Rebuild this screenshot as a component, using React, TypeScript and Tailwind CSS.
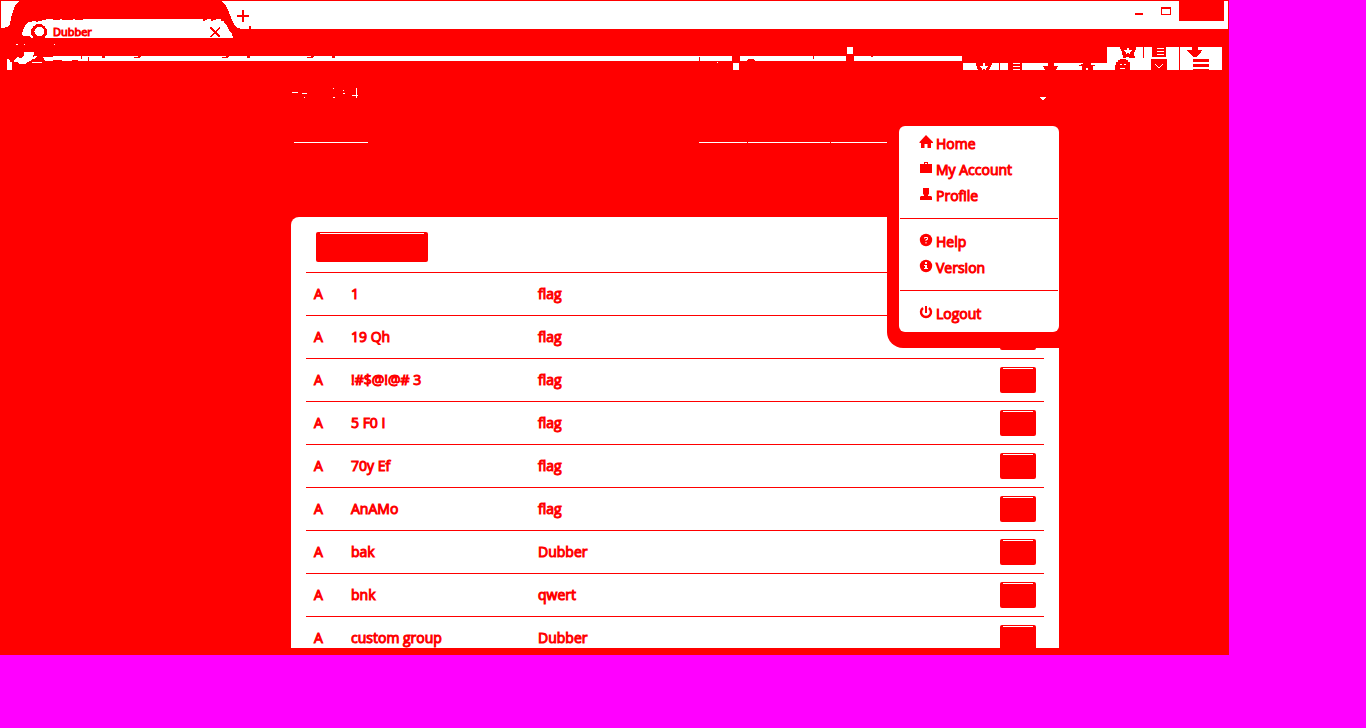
import type { ReactNode } from "react";

const RED = "#ff0000";

const rows: [string, string, string][] = [
  ["A", "1", "flag"],
  ["A", "19 Qh", "flag"],
  ["A", "!#$@!@# 3", "flag"],
  ["A", "5 F0 I", "flag"],
  ["A", "70y Ef", "flag"],
  ["A", "AnAMo", "flag"],
  ["A", "bak", "Dubber"],
  ["A", "bnk", "qwert"],
  ["A", "custom group", "Dubber"],
];

function TabStrip() {
  return (
    <div className="relative flex h-[29px] shrink-0 items-start justify-between border-x border-t border-[#ff0000] bg-white">
      <div className="absolute -top-px -left-px h-[38px] w-[260px]">
        <svg className="block" width="260" height="38" viewBox="0 0 260 38" shapeRendering="crispEdges" aria-hidden="true">
          <path fill={RED} d="M0 28H2L7 27L10 24L11 18L13 11L15 6L18 2L21 0H220L225 4L228 10L230 15L233 22L236 27L241 29V38H0Z" />
          <path
            fill="#fff"
            d="M22 34L23 30L25 26L28 22H32V21H36V22H38V21L46 20V19H53V20H60V19H62V20H73V19H75V20H83V19H203V21H205V20H207V19H211V21H213V20H216V19H221V21H224V23L227 26L229 30L232 34L233 38H31L30 36L23 36Z"
          />
          <circle cx="39" cy="32" r="8" fill={RED} />
          <circle cx="39.3" cy="31.5" r="4.8" fill="#fff" />
          <path stroke={RED} strokeWidth="2" d="M210.500 27.500L220 37M220 27.500L210.500 37" />
          <path fill={RED} d="M242 10h2v12h-2zM237 15h12v2h-12zM249 26h2v3h-2z" />
        </svg>
        <span className="absolute top-[24px] left-[53px] text-[11px] leading-4 font-normal [-webkit-text-stroke:1px_#ff0000]">
          Dubber
        </span>
      </div>
      <span />
      <div className="flex">
        <button aria-label="Minimize" className="mt-3 mr-[18px] h-[2px] w-2 bg-[#ff0000]" />
        <button aria-label="Maximize" className="mt-1.5 mr-2 h-2 w-2.5 border border-t-2 border-[#ff0000]" />
        <button aria-label="Close" className="mr-1 h-5 w-[45px] bg-[#ff0000]" />
      </div>
    </div>
  );
}

function Toolbar() {
  return (
    <div className="flex h-[51px] shrink-0">
      <svg className="shrink-0" width="350" height="51" viewBox="0 29 350 51" shapeRendering="crispEdges" aria-hidden="true">
        <path
          fill="#fff"
          d="M7 59h2v1h1v2h2v8h-5zM14 60l3-3h2v1h3v-1l2-2v-3h10v3h-1v3l-3 3l-3 1l-2 2h-6l-2-2h-3zM34 56h3l-2 3h-2zM32 62h10v1h-10zM42 57h8v-1h300v5h-272v-1h-6v1h-10v-1h-9v1h-8l-1-2zM16 44h2v1h-2zM24 44h1v1h-1zM54 44h1v1h-1z"
        />
        <path
          fill={RED}
          d="M48 56h5v1h-5zM81 56h1v3h-1zM88 57h1v4h-1zM102 56h3v2h-3zM138 56h3v1h-3zM134 57h6v1h-6zM226 56h3v1h-3zM222 57h6v1h-6zM247 56h3v2h-3zM311 56h3v1h-3zM307 57h6v1h-6zM332 56h3v2h-3zM54 60h6v1h-6z"
        />
      </svg>
      <div className="mt-[27px] h-[5px] flex-1 bg-white" />
      <svg className="shrink-0" width="539" height="51" viewBox="690 29 539 51" shapeRendering="crispEdges" aria-hidden="true">
        <path
          fill="#fff"
          d="M690 56h42v5h-42zM740 56h106v5h-106zM854 56h108v5h-108zM733 63h6v7h-6zM847 47h6v7h-6zM717 62h1v1h-1zM963 63h144v-16h115v23h-259z"
        />
        <path
          fill={RED}
          d="M699 57h1v4h-1zM747 60h1v-1h6v1h1v1h-8zM813 56h1v3h-1zM871 56h2v1h-2zM999 63h1v7h-1zM1008 63h14v7h-14zM1143 47h1v11h-1zM1179 46h1v24h-1zM1152 47h14v10h-14z"
        />
        <path
          fill={RED}
          d="M976 63h16v2h-1v2h-1v2h-1v1h-11v-1h-1v-3h-1zM1120 47h16v3h-1v2h-1v4h1v2h-12v-3h-1v-4h-1v-2h-1z"
        />
        <path
          fill="#fff"
          d="M983 63h2v3h3v1h-1v1h-1v2h-1v-1h-2v1h-1v-2h-1v-1h-1v-1h3zM1127 48h2v2h3v1h-1v1h-1v2h-1v-1h-2v1h-1v-2h-1v-1h-1v-1h3zM1126 57h3v1h-3z"
        />
        <path
          fill="#fff"
          d="M1013 63h7v1h-7zM1013 66h7v1h-7zM1013 69h7v1h-7zM1157 48h7v1h-7zM1157 51h7v1h-7zM1157 54h7v1h-7z"
        />
        <path
          fill={RED}
          d="M1048 63h6v3h4v1h-1v2h-1v1h-11v-1h-1v-2h-1v-1h5zM1083 63h8v2h4v1h-2v4h-11v-4h-3v-1h2v-1h2zM1192 47h6v3h4v1h-1v1l-5 5h-3l-5-5v-1h-1v-1h5z"
        />
        <path fill="#fff" d="M1086 68h2v2h-2z" />
        <path fill={RED} d="M1115 70v-5h1v-3h2v-2h2v-1h6v1h2v2h2v8zM1151 59h16v11h-16zM1193 59h16v3h-16zM1193 64h16v3h-16zM1193 69h16v1h-16z" />
        <path fill="#fff" d="M1120 64h2v1h-2zM1124 64h2v1h-2zM1120 68h5v1h-5z" />
        <path fill="none" stroke="#fff" d="M1155 64l4 4l4-4" />
      </svg>
    </div>
  );
}

function Icon({ children }: { children: ReactNode }) {
  return (
    <svg className="mt-1 shrink-0 self-start" width="14" height="14" viewBox="0 0 14 14" fill={RED} aria-hidden="true">
      {children}
    </svg>
  );
}

const HomeIcon = (
  <Icon>
    <path d="M7 0L14 7V8H12V13H8.500V9H5.500V13H2V8H0.500V7Z" />
  </Icon>
);
const BriefcaseIcon = (
  <Icon>
    <path fillRule="evenodd" d="M5 1H9V3H13V12H1V3H5ZM6 2V3H8V2Z" />
  </Icon>
);
const UserIcon = (
  <Icon>
    <path d="M4 1H10V7L9 8V9H12L13 10V13H1V10L2 9H5V8L4 7Z" />
  </Icon>
);
const HelpIcon = (
  <Icon>
    <circle cx="7" cy="7" r="6.200" />
    <path d="M5.500 5.500V4.500H8.500V6.500H7V8M7 9V10.500" stroke="#fff" fill="none" />
  </Icon>
);
const InfoIcon = (
  <Icon>
    <circle cx="7" cy="7" r="6.200" />
    <path d="M6 3H8V5H6ZM5 6H8V9H9V10H5V9H6V7H5Z" fill="#fff" />
  </Icon>
);
const PowerIcon = (
  <Icon>
    <path d="M4 3A5 5 0 1 0 10 3" fill="none" stroke={RED} strokeWidth="2.400" />
    <path d="M6 1H8V8H6Z" />
  </Icon>
);

function MenuItem({ icon, label }: { icon: ReactNode; label: string }) {
  return (
    <li>
      <a href="#" className="flex h-[26px] gap-[3px] pl-5 leading-[26px]">
        {icon}
        {label}
      </a>
    </li>
  );
}

function AccountMenu() {
  return (
    <div className="absolute top-[46px] right-0 w-[172px] rounded-bl-2xl bg-[#ff0000] pb-4 pl-3">
      <ul className="rounded-md bg-white py-[5px]">
        <MenuItem icon={HomeIcon} label="Home" />
        <MenuItem icon={BriefcaseIcon} label="My Account" />
        <MenuItem icon={UserIcon} label="Profile" />
        <li className="mx-px mt-[9px] mb-[10px] h-px bg-[#ff0000]" />
        <MenuItem icon={HelpIcon} label="Help" />
        <MenuItem icon={InfoIcon} label="Version" />
        <li className="mx-px mt-[9px] mb-[10px] h-px bg-[#ff0000]" />
        <MenuItem icon={PowerIcon} label="Logout" />
      </ul>
    </div>
  );
}

function PageHeader() {
  return (
    <header className="h-[137px] shrink-0 pt-2">
      <div className="flex h-[54px] justify-between">
        <svg width="68" height="12" viewBox="291 88 68 12" fill="#fff" shapeRendering="crispEdges" aria-hidden="true">
          <path d="M292 92h6v1h-6zM302 93h5v1h-5zM304 97h1v1h-1zM333 88h1v1h-1zM333 97h2v1h-2zM343 90h1v1h-1zM343 93h2v1h-2zM352 95h6v1h-6zM356 88h1v10h-1z" />
        </svg>
        <svg className="mt-[9px] mr-[13px]" width="6" height="3" viewBox="0 0 6 3" fill="#fff" shapeRendering="crispEdges" aria-hidden="true">
          <path d="M0 0h6v1h-1v1h-1v1h-2v-1h-1v-1h-1z" />
        </svg>
      </div>
      <nav className="flex justify-between pr-[172px] pl-[3px]">
        <span className="h-px w-[74px] bg-white" />
        <span className="flex gap-px">
          <span className="h-px w-12 bg-white" />
          <span className="h-px w-[82px] bg-white" />
          <span className="h-px w-14 bg-white" />
        </span>
      </nav>
    </header>
  );
}

function GroupCard() {
  return (
    <section className="min-h-0 flex-1 overflow-hidden rounded-t-lg bg-white px-[15px] pt-[15px]">
      <button aria-label="Add" className="mb-[10px] ml-[10px] block h-[30px] w-28 rounded-xs bg-[#ff0000] px-1 pt-px">
        <span className="block h-px w-full bg-white" />
        <span className="block h-7" />
      </button>
      <table className="w-full table-fixed border-collapse">
        <colgroup>
          <col className="w-[37px]" />
          <col className="w-[187px]" />
          <col />
          <col className="w-[52px]" />
        </colgroup>
        <tbody>
          {rows.map(([kind, name, owner]) => (
            <tr key={name} className="h-[43px] border-t border-[#ff0000]">
              <td className="p-0 pl-2">{kind}</td>
              <td className="p-0 pl-2">{name}</td>
              <td className="p-0 pl-2">{owner}</td>
              <td className="p-0 pl-2">
                <button aria-label={`Edit ${name}`} className="block h-[26px] w-9 rounded-xs bg-[#ff0000] px-[3px] pt-px">
                  <span className="block h-px w-full bg-white" />
                  <span className="block h-6" />
                </button>
              </td>
            </tr>
          ))}
        </tbody>
      </table>
    </section>
  );
}

export default function App() {
  return (
    <div className="h-screen bg-[#ff00ff] pr-[137px] pb-[73px] font-['Open_Sans',sans-serif] text-sm text-[#ff0000]">
      <div className="flex h-full flex-col overflow-hidden bg-[#ff0000] pb-[7px]">
        <TabStrip />
        <Toolbar />
        <main className="relative ml-[291px] flex min-h-0 w-full max-w-3xl flex-1 flex-col [-webkit-text-stroke:1px_#ff0000]">
          <PageHeader />
          <GroupCard />
          <AccountMenu />
        </main>
      </div>
    </div>
  );
}
